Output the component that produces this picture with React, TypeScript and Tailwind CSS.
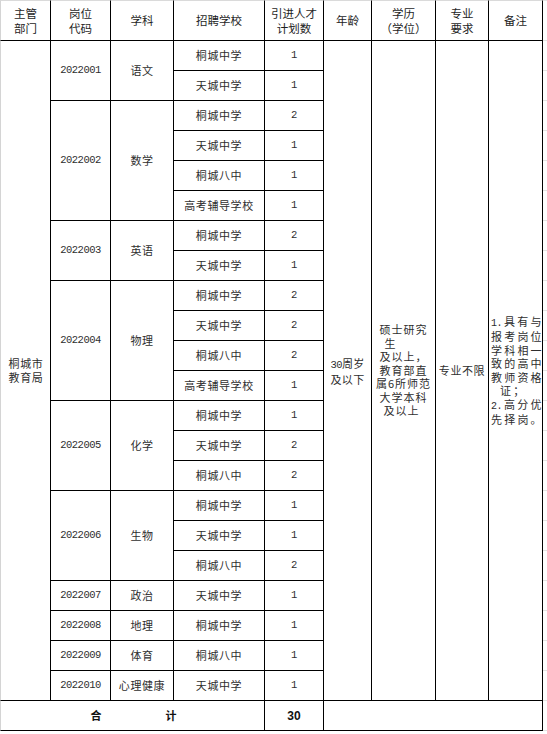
type Group = { code: string; subj: string; rows: [string, number][] };

const GROUPS: Group[] = [
  { code: "2022001", subj: "语文", rows: [["桐城中学", 1], ["天城中学", 1]] },
  {
    code: "2022002",
    subj: "数学",
    rows: [["桐城中学", 2], ["天城中学", 1], ["桐城八中", 1], ["高考辅导学校", 1]],
  },
  { code: "2022003", subj: "英语", rows: [["桐城中学", 2], ["天城中学", 1]] },
  {
    code: "2022004",
    subj: "物理",
    rows: [["桐城中学", 2], ["天城中学", 2], ["桐城八中", 2], ["高考辅导学校", 1]],
  },
  { code: "2022005", subj: "化学", rows: [["桐城中学", 1], ["天城中学", 2], ["桐城八中", 2]] },
  { code: "2022006", subj: "生物", rows: [["桐城中学", 1], ["天城中学", 1], ["桐城八中", 2]] },
  { code: "2022007", subj: "政治", rows: [["天城中学", 1]] },
  { code: "2022008", subj: "地理", rows: [["桐城中学", 1]] },
  { code: "2022009", subj: "体育", rows: [["桐城八中", 1]] },
  { code: "2022010", subj: "心理健康", rows: [["天城中学", 1]] },
];

const TOTAL_ROWS = GROUPS.reduce((n, g) => n + g.rows.length, 0);

// shared cell styles
const cell = "border-r border-b border-black p-0 text-center align-middle";
const first = "border-l border-l-[#d4d4d4]";
const head = "border-t border-t-[#dadada] text-[11.5px] leading-[15px] font-normal text-[#1e1e1e]";
const body = "text-[11px] tracking-[0.6px] text-[#2e2e2e]";
const mono = "font-['Liberation_Mono',monospace] text-[10.5px] tracking-[-0.5px] text-[#2e2e2e]";
const spare = "p-0 border-b border-b-[#e4e4e4]";

function HeaderRow() {
  return (
    <tr className="h-[41px]">
      <th className={`${cell} ${first} ${head}`}>
        主管
        <br />
        部门
      </th>
      <th className={`${cell} ${head}`}>
        岗位
        <br />
        代码
      </th>
      <th className={`${cell} ${head}`}>学科</th>
      <th className={`${cell} ${head}`}>招聘学校</th>
      <th className={`${cell} ${head}`}>
        引进人才
        <br />
        计划数
      </th>
      <th className={`${cell} ${head}`}>年龄</th>
      <th className={`${cell} ${head}`}>
        学历
        <br />
        （学位）
      </th>
      <th className={`${cell} ${head}`}>
        专业
        <br />
        要求
      </th>
      <th className={`${cell} ${head}`}>备注</th>
      <th className={`${spare} border-t border-t-[#e4e4e4]`} />
    </tr>
  );
}

function Education() {
  const lines: [string, string][] = [
    ["硕士研究", ""],
    ["生", "pr-[26px]"],
    ["及以上，", ""],
    ["教育部直", ""],
    ["属6所师范", ""],
    ["大学本科", ""],
    ["及以上", "pr-[4px]"],
  ];
  return (
    <div className="text-[11px] leading-[13.6px] tracking-[1px] text-[#2e2e2e]">
      {lines.map(([t, c], i) => (
        <div key={i} className={c}>
          {t}
        </div>
      ))}
    </div>
  );
}

function Notes() {
  const num = "font-['Liberation_Mono',monospace] text-[10px] tracking-[-0.5px] mr-[2px]";
  return (
    <div className="w-[53px] whitespace-nowrap text-left text-[11px] leading-[13.5px] tracking-[2.2px] text-[#2e2e2e]">
      <div className="pl-[2px]">
        <span className={num}>1.</span>具有与
      </div>
      <div className="pl-[2px]">报考岗位</div>
      <div className="pl-[2px]">学科相一</div>
      <div className="pl-[2px]">致的高中</div>
      <div className="pl-[2px]">教师资格</div>
      <div className="pl-[11px]">证；</div>
      <div className="pl-[2px]">
        <span className={num}>2.</span>高分优
      </div>
      <div className="pl-[2px]">先择岗。</div>
    </div>
  );
}

function BodyRows() {
  const out: React.ReactNode[] = [];
  let idx = 0;
  GROUPS.forEach((g) => {
    g.rows.forEach(([school, num], i) => {
      const top = idx === 0;
      out.push(
        <tr key={`${g.code}-${i}`} className="h-[30px]">
          {top && (
            <td rowSpan={TOTAL_ROWS} className={`${cell} ${first} ${body}`}>
              <div className="leading-[13.5px] pl-[1px]">
                桐城市
                <br />
                教育局
              </div>
            </td>
          )}
          {i === 0 && (
            <td rowSpan={g.rows.length} className={`${cell} ${mono}`}>
              {g.code}
            </td>
          )}
          {i === 0 && (
            <td rowSpan={g.rows.length} className={`${cell} ${body}`}>
              {g.subj}
            </td>
          )}
          <td className={`${cell} ${body}`}>{school}</td>
          <td className={`${cell} ${mono}`}>{num}</td>
          {top && (
            <>
              <td rowSpan={TOTAL_ROWS} className={`${cell} ${body}`}>
                <div className="leading-[14px] tracking-[0.3px]">
                  <span className="font-['Liberation_Mono',monospace] text-[10.5px] tracking-[-0.5px]">30</span>
                  周岁
                  <br />
                  及以下
                </div>
              </td>
              <td rowSpan={TOTAL_ROWS} className={cell}>
                <Education />
              </td>
              <td rowSpan={TOTAL_ROWS} className={`${cell} ${body}`}>
                专业不限
              </td>
              <td rowSpan={TOTAL_ROWS} className={cell}>
                <Notes />
              </td>
            </>
          )}
          <td className={spare} />
        </tr>
      );
      idx++;
    });
  });
  return <>{out}</>;
}

export default function App() {
  return (
    <div className="h-[734px] w-[547px] overflow-hidden bg-white font-['Noto_Sans_CJK_SC','Noto_Sans',sans-serif]">
      <table className="w-[547px] table-fixed border-separate border-spacing-0">
        <colgroup>
          <col className="w-[51px]" />
          <col className="w-[60px]" />
          <col className="w-[63px]" />
          <col className="w-[91px]" />
          <col className="w-[59px]" />
          <col className="w-[48px]" />
          <col className="w-[64px]" />
          <col className="w-[53px]" />
          <col className="w-[54px]" />
          <col className="w-[4px]" />
        </colgroup>
        <thead>
          <HeaderRow />
        </thead>
        <tbody>
          <BodyRows />
          <tr className="h-[30px]">
            <td colSpan={4} className={`${cell} ${first} text-[11px] font-bold text-[#111]`}>
              <span className="pl-[2px]">合</span>
              <span className="ml-[64px]">计</span>
            </td>
            <td className={`${cell} font-['Liberation_Sans',sans-serif] text-[12px] font-bold text-[#111]`}>30</td>
            <td colSpan={4} className={cell} />
            <td className={spare} />
          </tr>
        </tbody>
      </table>
    </div>
  );
}
